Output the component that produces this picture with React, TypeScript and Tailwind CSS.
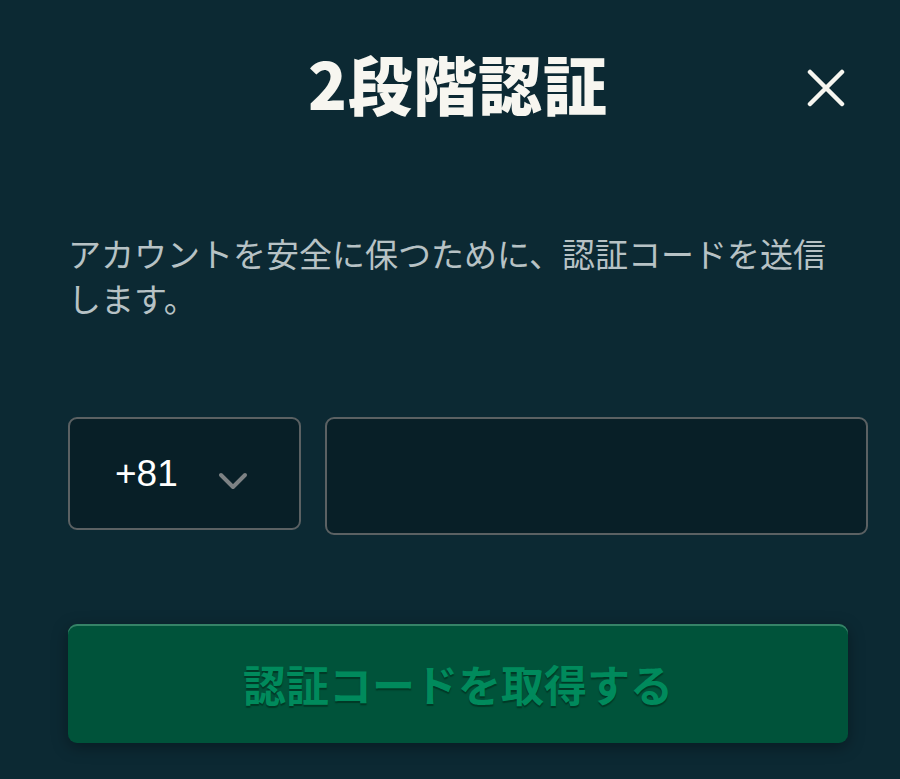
import React from "react";

const jp = { fontFamily: '"Noto Sans CJK JP", "Noto Sans", sans-serif' };

export default function App() {
  return (
    <div className="w-[900px] h-[779px] overflow-hidden bg-[#0c2933]" style={jp}>
      <div className="pl-[68px] pr-[52px] pt-[44px]">
        {/* Header */}
        <div className="grid grid-cols-[1fr_auto_1fr] items-center">
          <div />
          <h1 className="text-[64px] leading-[76px] font-black text-[#f7f6f0] tracking-[1px]">
            2段階認証
          </h1>
          <div className="self-start flex justify-end pr-[3px] pt-[25px]">
            <button className="w-[38px] h-[38px] text-[#f7f6f0]" aria-label="close">
              <svg viewBox="0 0 38 38" className="w-[38px] h-[38px]">
                <path d="M3 3 L35 35 M35 3 L3 35" stroke="currentColor" strokeWidth="4.5" strokeLinecap="round" />
              </svg>
            </button>
          </div>
        </div>

        {/* Description */}
        <p className="mt-[111px] text-[33px] leading-[45px] text-[#b7c2c5] font-normal">
          アカウントを安全に保つために、認証コードを送信します。
        </p>

        {/* Phone row */}
        <div className="mt-[96px] mr-[-20px] flex items-start gap-[24px]">
          <div className="w-[233px] h-[113px] rounded-[9px] border-2 border-[#5b6163] bg-[#081f27] flex items-center pl-[45px]">
            <span
              className="text-[37px] text-white"
              style={{ fontFamily: '"Liberation Sans", Arial, sans-serif' }}
            >
              +81
            </span>
            <svg viewBox="0 0 30 18" className="ml-[40px] mt-[14px] w-[30px] h-[18px] text-[#7d8284]">
              <path d="M3 3 L15 15 L27 3" fill="none" stroke="currentColor" strokeWidth="4" strokeLinecap="round" strokeLinejoin="round" />
            </svg>
          </div>
          <input
            className="flex-1 h-[118px] rounded-[9px] border-2 border-[#5b6163] bg-[#081f27] outline-none px-4 text-white text-[32px]"
            type="tel"
          />
        </div>

        {/* Submit */}
        <button className="mt-[89px] w-full h-[119px] rounded-[9px] bg-[#00533a] shadow-[inset_0_2px_0_rgba(120,190,160,0.45),0_4px_16px_rgba(0,0,0,0.35)] text-[43px] font-bold text-[#008a5c] [text-shadow:0_2px_1px_rgba(0,40,25,0.6)]">
          認証コードを取得する
        </button>
      </div>
    </div>
  );
}
